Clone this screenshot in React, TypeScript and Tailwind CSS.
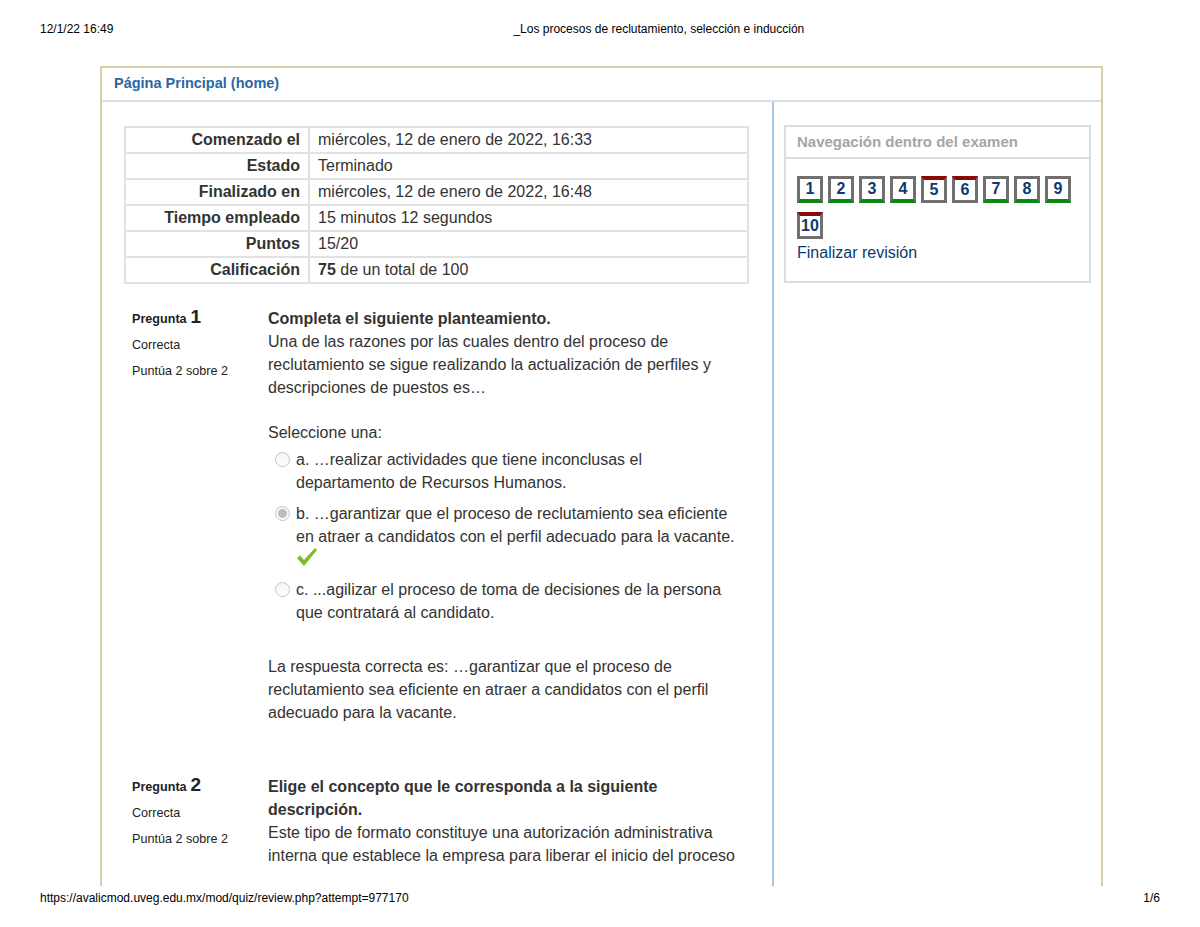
import React from 'react';

const font = { fontFamily: '"Liberation Sans", Arial, Helvetica, sans-serif' };

const summary: [string, React.ReactNode][] = [
  ['Comenzado el', 'miércoles, 12 de enero de 2022, 16:33'],
  ['Estado', 'Terminado'],
  ['Finalizado en', 'miércoles, 12 de enero de 2022, 16:48'],
  ['Tiempo empleado', '15 minutos 12 segundos'],
  ['Puntos', '15/20'],
  [
    'Calificación',
    <>
      <b>75</b> de un total de 100
    </>,
  ],
];

// true = correcta, false = incorrecta
const nav: [number, boolean][] = [
  [1, true], [2, true], [3, true], [4, true], [5, false],
  [6, false], [7, true], [8, true], [9, true], [10, false],
];

function Radio({ checked }: { checked?: boolean }) {
  return (
    <span className="mt-[4px] flex h-[15px] w-[15px] shrink-0 items-center justify-center rounded-full border border-[#c4c4c4] bg-gradient-to-b from-[#f4f4f4] to-white">
      {checked && <span className="h-[9px] w-[9px] rounded-full bg-[#bdbdbd]" />}
    </span>
  );
}

function QInfo({ n }: { n: number }) {
  return (
    <div className="w-[166px] shrink-0 pl-[30px] text-[12.6px] text-[#222]">
      <div className="flex items-baseline gap-[4px] leading-[20px]">
        <span className="font-bold">Pregunta</span>
        <span className="text-[19px] font-bold">{n}</span>
      </div>
      <div className="mt-[6px] leading-[20px]">Correcta</div>
      <div className="mt-[6px] leading-[20px]">Puntúa 2 sobre 2</div>
    </div>
  );
}

export default function App() {
  return (
    <div className="h-[927px] w-[1200px] overflow-hidden bg-white text-[#333]" style={font}>
      {/* print header */}
      <div className="flex h-[66px] pt-[21px] text-[12px] leading-[16px] text-black">
        <span className="ml-[40px]">12/1/22 16:49</span>
        <span className="ml-[400px]">_Los procesos de reclutamiento, selección e inducción</span>
      </div>

      <div className="ml-[100px] flex h-[820px] w-[1003px] flex-col border-x-2 border-t-2 border-[#d6cfa8]">
        <div className="flex h-[34px] shrink-0 items-center border-b-2 border-[#dedede] pl-[12px] text-[14.5px] font-bold text-[#2a67a6]">
          Página Principal (home)
        </div>

        <div className="flex min-h-0 flex-1 overflow-hidden">
          {/* main column */}
          <div className="w-[670px] shrink-0 pt-[24px]">
            <table className="ml-[22px] w-[625px] border-collapse border-2 border-[#e2e2e2] text-[16px]">
              <tbody>
                {summary.map(([k, v]) => (
                  <tr key={k} className="h-[26px] border-b-2 border-[#e2e2e2]">
                    <th className="w-[184px] border-r-2 border-[#e2e2e2] pr-[8px] text-right font-bold text-[#333]">{k}</th>
                    <td className="pl-[8px] text-[#333]">{v}</td>
                  </tr>
                ))}
              </tbody>
            </table>

            {/* pregunta 1 */}
            <div className="mt-[23px] flex">
              <QInfo n={1} />
              <div className="w-[480px] text-[16px] leading-[23px] text-[#333]">
                <div className="font-bold">Completa el siguiente planteamiento.</div>
                <div>
                  Una de las razones por las cuales dentro del proceso de reclutamiento se sigue realizando la actualización de perfiles y descripciones de puestos es…
                </div>
                <div className="mt-[22px]">Seleccione una:</div>
                <div className="mt-[4px] flex gap-[6px] pl-[7px]">
                  <Radio />
                  <div className="w-[442px]">a. …realizar actividades que tiene inconclusas el departamento de Recursos Humanos.</div>
                </div>
                <div className="mt-[8px] flex gap-[6px] pl-[7px]">
                  <Radio checked />
                  <div className="w-[442px]">
                    <div>b. …garantizar que el proceso de reclutamiento sea eficiente en atraer a candidatos con el perfil adecuado para la vacante.</div>
                    <svg width="22" height="22" viewBox="0 0 22 22" className="mt-[-2px]">
                      <path d="M1 12 L4 9.5 L8 14 L19 2 L21 4 L8 20 Z" fill="#7dbb24" />
                    </svg>
                  </div>
                </div>
                <div className="mt-[10px] flex gap-[6px] pl-[7px]">
                  <Radio />
                  <div className="w-[442px]">c. ...agilizar el proceso de toma de decisiones de la persona que contratará al candidato.</div>
                </div>
                <div className="mt-[31px]">
                  La respuesta correcta es: …garantizar que el proceso de reclutamiento sea eficiente en atraer a candidatos con el perfil adecuado para la vacante.
                </div>
              </div>
            </div>

            {/* pregunta 2 */}
            <div className="mt-[51px] flex">
              <QInfo n={2} />
              <div className="w-[480px] text-[16px] leading-[23px] text-[#333]">
                <div className="font-bold">Elige el concepto que le corresponda a la siguiente descripción.</div>
                <div>
                  Este tipo de formato constituye una autorización administrativa interna que establece la empresa para liberar el inicio del proceso
                </div>
              </div>
            </div>
          </div>

          <div className="w-[2px] shrink-0 bg-[#a6c8e4]" />

          {/* navegación */}
          <div className="flex-1 pl-[10px] pr-[10px] pt-[23px]">
            <div className="w-[307px] border-2 border-[#dcdcdc]">
              <div className="flex h-[32px] items-center border-b-2 border-[#dcdcdc] pl-[11px] text-[15px] font-bold text-[#a5a5a5]">
                Navegación dentro del examen
              </div>
              <div className="px-[11px] pb-[18px] pt-[17px]">
                <div className="flex w-[285px] flex-wrap gap-x-[5px] gap-y-[9px]">
                  {nav.map(([n, ok]) => (
                    <div
                      key={n}
                      className={
                        ok
                          ? 'flex h-[27px] w-[26px] items-center justify-center border-[3px] border-[#707070] border-b-[4px] border-b-[#0b8a12] text-[16px] font-bold leading-none text-[#0c3a6e]'
                          : 'flex h-[27px] w-[26px] items-center justify-center border-[3px] border-[#707070] border-t-[4px] border-t-[#8b0a0a] text-[16px] font-bold leading-none text-[#0c3a6e]'
                      }
                    >
                      {n}
                    </div>
                  ))}
                </div>
                <div className="mt-[4px] text-[16px] leading-[20px] text-[#0c3a6e]">Finalizar revisión</div>
              </div>
            </div>
          </div>
        </div>
      </div>

      {/* print footer */}
      <div className="mt-[4px] flex justify-between px-[40px] text-[12px] leading-[16px] text-black">
        <span>https://avalicmod.uveg.edu.mx/mod/quiz/review.php?attempt=977170</span>
        <span>1/6</span>
      </div>
    </div>
  );
}
